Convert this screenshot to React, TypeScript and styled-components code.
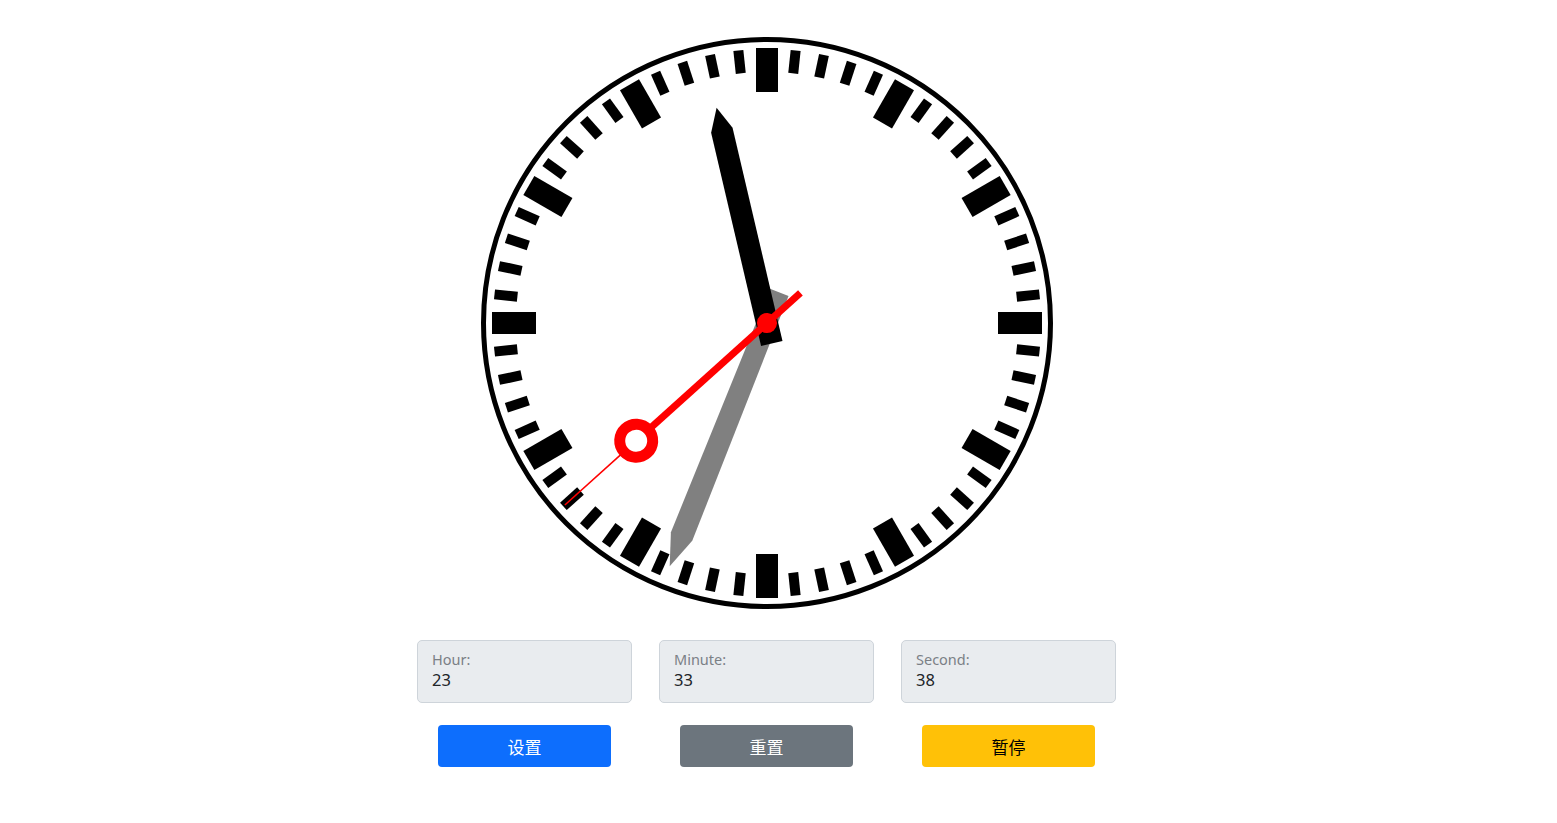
import styled, { createGlobalStyle } from 'styled-components';

const GlobalStyle = createGlobalStyle`
  html, body {
    margin: 0;
    padding: 0;
    background: #fff;
    font-family: "Noto Sans", "Noto Sans CJK SC", sans-serif;
    color: #212529;
  }
`;

const Page = styled.div`
  display: flex;
  flex-direction: column;
  align-items: center;
  padding: 33px 23px 0 0;
`;

const ClockFace = styled.svg`
  display: block;
  width: 580px;
  height: 580px;
`;

const FormRow = styled.div`
  display: grid;
  grid-template-columns: repeat(3, 215px);
  column-gap: 27px;
  margin: 27px 1px 0 0;
`;

const Column = styled.div`
  display: flex;
  flex-direction: column;
  align-items: center;
  gap: 22px;
`;

const Field = styled.div`
  box-sizing: border-box;
  width: 100%;
  height: 63px;
  padding: 9px 14px 0;
  background: #e9ecef;
  border: 1px solid #ced4da;
  border-radius: 5px;
  display: flex;
  flex-direction: column;
`;

const FieldLabel = styled.div`
  font-size: 14.5px;
  line-height: 19px;
  color: #7b8086;
`;

const FieldValue = styled.div`
  font-size: 16.5px;
  line-height: 22px;
  color: #212529;
`;

const Button = styled.button<{ $bg: string; $fg: string }>`
  width: 173px;
  height: 42px;
  border: 0;
  border-radius: 4px;
  background: ${(p) => p.$bg};
  color: ${(p) => p.$fg};
  font-family: "Noto Sans CJK SC", sans-serif;
  font-size: 17px;
  cursor: pointer;
`;

const TIME = { h: 23, m: 33, s: 38 };

const Ticks = () => (
  <g>
    {Array.from({ length: 60 }, (_, i) =>
      i % 5 === 0 ? (
        <rect key={i} x={-11} y={-275} width={22} height={44} transform={`rotate(${i * 6})`} />
      ) : (
        <rect key={i} x={-5} y={-274} width={10} height={23} transform={`rotate(${i * 6})`} />
      )
    )}
  </g>
);

const Clock = ({ h, m, s }: { h: number; m: number; s: number }) => {
  const hourAngle = (h % 12) * 30 + m * 0.5 + s / 120;
  const minuteAngle = m * 6 + s * 0.1;
  const secondAngle = s * 6;

  return (
    <ClockFace viewBox="-290 -290 580 580">
      <circle r={283.5} fill="none" stroke="#000" strokeWidth={5} />
      <Ticks />
      <polygon
        fill="#808080"
        points="-10,33 10,33 11.5,-230 0,-262 -11.5,-230"
        transform={`rotate(${minuteAngle})`}
      />
      <polygon
        fill="#000"
        points="-11,21 11,21 11,-198 0,-221 -11,-198"
        transform={`rotate(${hourAngle})`}
      />
      <g transform={`rotate(${secondAngle})`} fill="#f00" stroke="#f00">
        <line x1={0} y1={45} x2={0} y2={-160} strokeWidth={7} />
        <line x1={0} y1={-190} x2={0} y2={-272} strokeWidth={1.6} />
        <circle cy={-176} r={16.5} fill="none" strokeWidth={11} />
        <circle r={10} stroke="none" />
      </g>
    </ClockFace>
  );
};

export default function App() {
  return (
    <>
      <GlobalStyle />
      <Page>
        <Clock {...TIME} />
        <FormRow>
          <Column>
            <Field>
              <FieldLabel>Hour:</FieldLabel>
              <FieldValue>{TIME.h}</FieldValue>
            </Field>
            <Button $bg="#0d6efd" $fg="#fff">设置</Button>
          </Column>
          <Column>
            <Field>
              <FieldLabel>Minute:</FieldLabel>
              <FieldValue>{TIME.m}</FieldValue>
            </Field>
            <Button $bg="#6c757d" $fg="#fff">重置</Button>
          </Column>
          <Column>
            <Field>
              <FieldLabel>Second:</FieldLabel>
              <FieldValue>{TIME.s}</FieldValue>
            </Field>
            <Button $bg="#ffc107" $fg="#000">暂停</Button>
          </Column>
        </FormRow>
      </Page>
    </>
  );
}
